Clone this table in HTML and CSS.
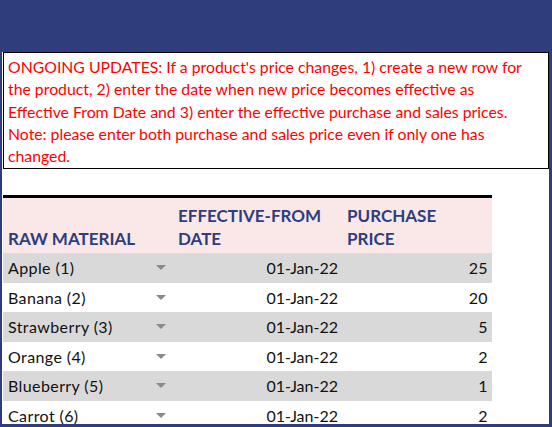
FILE: index.html
```html
<!DOCTYPE html>
<html>
<head>
<meta charset="utf-8">
<link rel="stylesheet" href="styles.css">
</head>
<body>
<div class="topband"></div>
<div class="panel">
  <div class="note">ONGOING UPDATES: If a product's price changes, 1) create a new row for<br>the product, 2) enter the date when new price becomes effective as<br>Effective From Date and 3) enter the effective purchase and sales prices.<br>Note: please enter both purchase and sales price even if only one has<br>changed.</div>
  <div class="table">
    <div class="row head">
      <div class="c1">RAW MATERIAL</div>
      <div class="c2">EFFECTIVE-FROM<br>DATE</div>
      <div class="c3">PURCHASE<br>PRICE</div>
    </div>
    <div class="row alt"><div class="c1"><span>Apple (1)</span><i class="arrow"></i></div><div class="c2">01-Jan-22</div><div class="c3">25</div></div>
    <div class="row"><div class="c1"><span>Banana (2)</span><i class="arrow"></i></div><div class="c2">01-Jan-22</div><div class="c3">20</div></div>
    <div class="row alt"><div class="c1"><span>Strawberry (3)</span><i class="arrow"></i></div><div class="c2">01-Jan-22</div><div class="c3">5</div></div>
    <div class="row"><div class="c1"><span>Orange (4)</span><i class="arrow"></i></div><div class="c2">01-Jan-22</div><div class="c3">2</div></div>
    <div class="row alt"><div class="c1"><span>Blueberry (5)</span><i class="arrow"></i></div><div class="c2">01-Jan-22</div><div class="c3">1</div></div>
    <div class="row"><div class="c1"><span>Carrot (6)</span><i class="arrow"></i></div><div class="c2">01-Jan-22</div><div class="c3">2</div></div>
  </div>
</div>
</body>
</html>
```
FILE: styles.css
```css
html, body {
  margin: 0;
  padding: 0;
}
body {
  background: #2f3d7c;
  width: 552px;
  height: 427px;
  overflow: hidden;
  font-family: Lato, "Open Sans", sans-serif;
}
.topband {
  height: 52px;
}
.panel {
  background: #ffffff;
  margin: 0 3px 0 2px;
  height: 372px;
  overflow: hidden;
  padding-left: 1px;
}
.note {
  border: 1px solid #000;
  color: #ff0000;
  font-size: 15.8px;
  line-height: 22.3px;
  white-space: nowrap;
  overflow: hidden;
  padding: 3px 0 0 4px;
  box-sizing: border-box;
  height: 117px;
}
.table {
  margin-top: 26px;
  width: 489px;
  border-top: 3px solid #000;
}
.row {
  display: grid;
  grid-template-columns: 167px 172px 150px;
  height: 29.5px;
  align-items: center;
  font-size: 16px;
  letter-spacing: 0.4px;
  color: #111;
}
.row.alt {
  background: #d9d9d9;
}
.row.head {
  height: 55px;
  background: #fae8e8;
  align-items: end;
  color: #2f3d7c;
  font-weight: bold;
  font-size: 17px;
  letter-spacing: 0;
  line-height: 23px;
  padding-bottom: 3px;
  box-sizing: border-box;
}
.row.head .c2, .row.head .c3 {
  text-align: left;
}
.c1 {
  padding-left: 5px;
  display: flex;
  align-items: center;
  justify-content: space-between;
}
.row.head .c1 {
  display: block;
}
.c2 {
  text-align: right;
  padding-right: 4px;
  letter-spacing: 0;
}
.row.head .c2 {
  padding-left: 8px;
}
.c3 {
  text-align: right;
  padding-right: 4px;
}
.row.head .c3 {
  padding-left: 5px;
}
.arrow {
  width: 0;
  height: 0;
  border-left: 5px solid transparent;
  border-right: 5px solid transparent;
  border-top: 5px solid #8a8a8a;
  margin-right: 4px;
}
```
